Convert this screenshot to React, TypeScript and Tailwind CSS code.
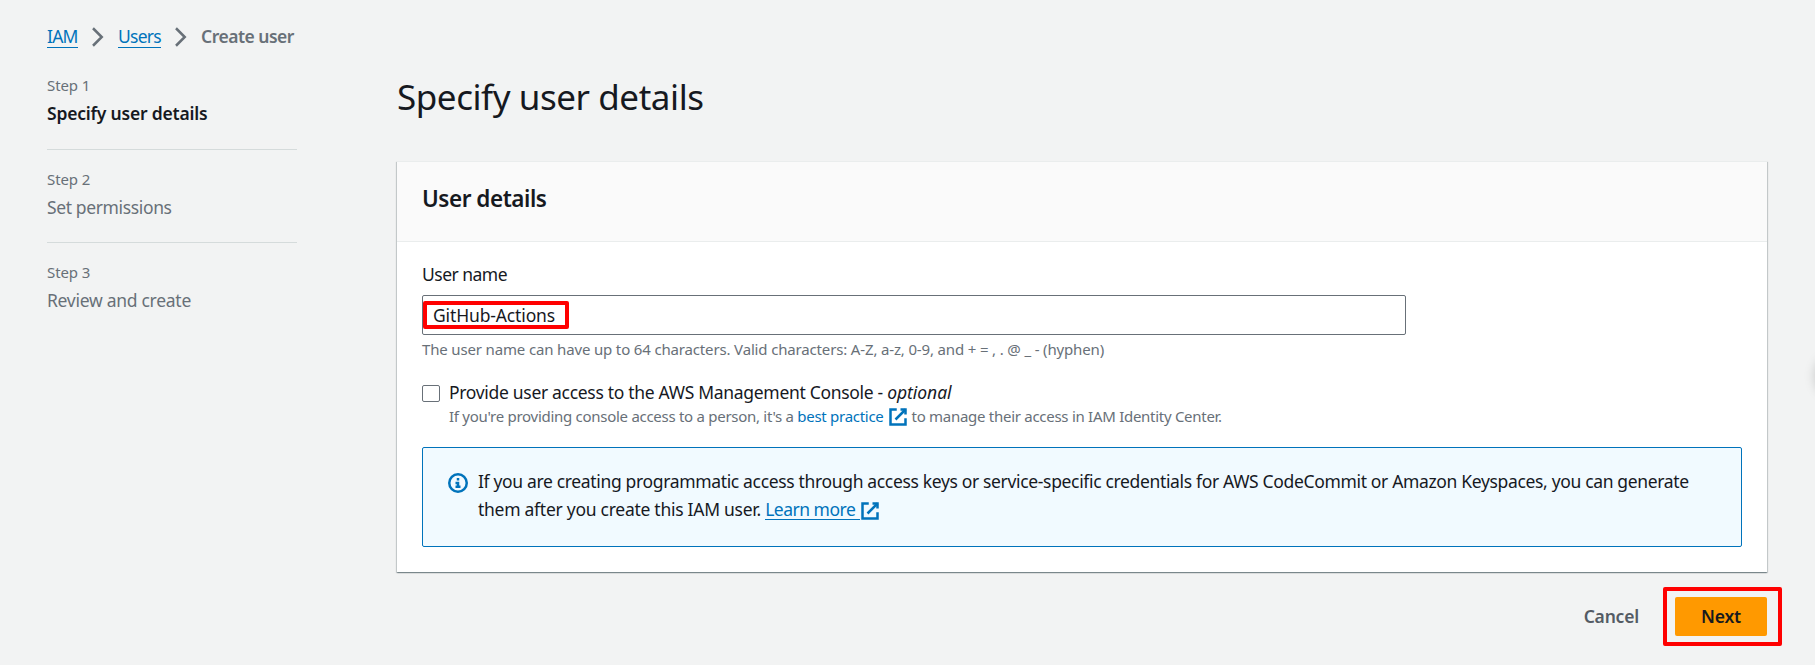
import type { ReactNode } from "react";

function ExternalIcon({ className = "" }: { className?: string }) {
  return (
    <svg viewBox="0 0 16 16" className={`inline-block h-5 w-5 fill-none stroke-[#0073bb] stroke-2 ${className}`}>
      <path d="M10 2h4v4" />
      <path d="M6 10l8-8" />
      <path d="M14 9.048V14H2V2h5" />
    </svg>
  );
}

function Chevron() {
  return (
    <svg viewBox="0 0 16 16" className="mx-[10px] mt-[3px] h-5 w-5 fill-none stroke-[#687078] stroke-2">
      <path d="M4 1l7 7-7 7" />
    </svg>
  );
}

function Breadcrumb({ children, className }: { children: ReactNode; className: string }) {
  return (
    <a href="#" className={`h-6 overflow-visible whitespace-nowrap border-b border-[#0073bb] leading-[25px] text-[#0073bb] ${className}`}>
      {children}
    </a>
  );
}

function Step({ label, title, className, titleClass }: { label: string; title: string; className: string; titleClass: string }) {
  return (
    <li className={`border-[#d5dbdb] ${className}`}>
      <div className="text-[15px] leading-5 tracking-[-0.1px] text-[#687078]">{label}</div>
      <div className={`mt-1 leading-7 ${titleClass}`}>{title}</div>
    </li>
  );
}

export default function App() {
  return (
    <div className="relative h-[665px] w-[1815px] overflow-hidden bg-[#f2f3f3] pl-[47px] pt-6 font-['Noto_Sans',sans-serif] text-[17.5px] text-[#16191f]">
      <nav className="flex h-[25px] items-start">
        <Breadcrumb className="w-[31px] tracking-[-0.77px]">IAM</Breadcrumb>
        <Chevron />
        <Breadcrumb className="w-[43px] tracking-[-0.74px]">Users</Breadcrumb>
        <Chevron />
        <span className="font-semibold leading-[25px] tracking-[-0.5px] text-[#687078]">Create user</span>
      </nav>

      <div className="flex">
        <ol className="mt-[26px] w-[250px] shrink-0">
          <Step label="Step 1" title="Specify user details" className="border-b pb-[22px]" titleClass="font-semibold tracking-[-0.2px]" />
          <Step label="Step 2" title="Set permissions" className="border-b pb-[21px] pt-[19px]" titleClass="tracking-[-0.37px] text-[#687078]" />
          <Step label="Step 3" title="Review and create" className="pt-[19px]" titleClass="tracking-[-0.28px] text-[#687078]" />
        </ol>

        <main className="ml-[100px] mt-[25px] w-[1370px]">
          <h1 className="text-[35px] leading-[45px] tracking-[-0.44px]">Specify user details</h1>

          <section className="mt-[42px] border-t border-[#eaeded] bg-white pb-[25px] shadow-[0_1px_1px_0_rgba(0,28,36,0.3),1px_1px_1px_0_rgba(0,28,36,0.15),-1px_1px_1px_0_rgba(0,28,36,0.15)]">
            <header className="h-20 border-b border-[#eaeded] bg-[#fafafa] px-[25px] pt-[22px]">
              <h2 className="text-[22.5px] font-semibold leading-[30px] tracking-[-0.47px]">User details</h2>
            </header>

            <div className="px-[25px] pt-5">
              <label className="block leading-[25px] tracking-[-0.52px]">User name</label>
              <div className="relative mt-2 flex h-10 w-[984px] items-center rounded-[2px] border border-[#687078] bg-white pl-[10px]">
                <span className="tracking-[-0.14px]">GitHub-Actions</span>
                <div className="absolute left-0 top-[5px] h-[28px] w-[146px] rounded-[2px] border-4 border-[#ff0000]" />
              </div>
              <p className="mt-1 text-[15px] leading-5 tracking-[-0.155px] text-[#687078]">
                The user name can have up to 64 characters. Valid characters: A-Z, a-z, 0-9, and + = , . @ _ - (hyphen)
              </p>

              <div className="mt-[21px] flex">
                <span className="mt-[5px] h-[17px] w-[18px] rounded-[2px] border border-[#687078] bg-white" />
                <div className="ml-[9px] whitespace-nowrap">
                  <div className="leading-[25px] tracking-[-0.31px]">
                    Provide user access to the AWS Management Console - <em className="tracking-[-0.05px]">optional</em>
                  </div>
                  <div className="mt-px flex h-5 items-center whitespace-pre text-[15px] leading-5 tracking-[-0.28px] text-[#687078]">
                    <span>{"If you're providing console access to a person, it's a "}</span>
                    <a href="#" className="text-[#0073bb]">best practice</a>
                    <ExternalIcon className="ml-1 mr-1 mt-[2px]" />
                    <span>to manage their access in IAM Identity Center.</span>
                  </div>
                </div>
              </div>

              <div className="mt-[21px] flex h-[100px] rounded-[2px] border border-[#0073bb] bg-[#f1faff] pl-[25px] pt-[19px]">
                <svg viewBox="0 0 16 16" className="mt-[6px] h-5 w-5 fill-none stroke-[#0073bb] stroke-2">
                  <circle cx="8" cy="8" r="7" />
                  <path d="M8 11V8H6" />
                  <path d="M10 11H6" />
                  <path d="M7 5h2" />
                </svg>
                <div className="ml-[10px] whitespace-nowrap leading-7">
                  <div className="tracking-[-0.343px]">
                    If you are creating programmatic access through access keys or service-specific credentials for AWS CodeCommit or Amazon Keyspaces, you can generate
                  </div>
                  <div className="flex whitespace-pre tracking-[-0.27px]">
                    <span>{"them after you create this IAM user. "}</span>
                    <a href="#" className="flex h-[25px] w-[95px] border-b border-[#0073bb] tracking-[-0.5px] text-[#0073bb]">Learn more</a>
                    <ExternalIcon className="mt-[6px]" />
                  </div>
                </div>
              </div>
            </div>
          </section>

          <footer className="mt-[25px] flex items-center justify-end font-semibold">
            <button className="mr-9 tracking-[-0.2px] text-[#545b64]">Cancel</button>
            <div className="relative">
              <button className="block h-[39px] w-[92px] rounded-[2px] bg-[#ff9900] tracking-[-0.2px]">Next</button>
              <div className="absolute -left-[12px] -top-[10px] h-[59px] w-[119px] rounded-[2px] border-4 border-[#ff0000]" />
            </div>
          </footer>
        </main>
      </div>

      <div className="absolute -right-[42px] top-[356px] h-10 w-10 rounded-full shadow-[0_0_12px_2px_rgba(0,0,0,0.18)]" />
    </div>
  );
}
